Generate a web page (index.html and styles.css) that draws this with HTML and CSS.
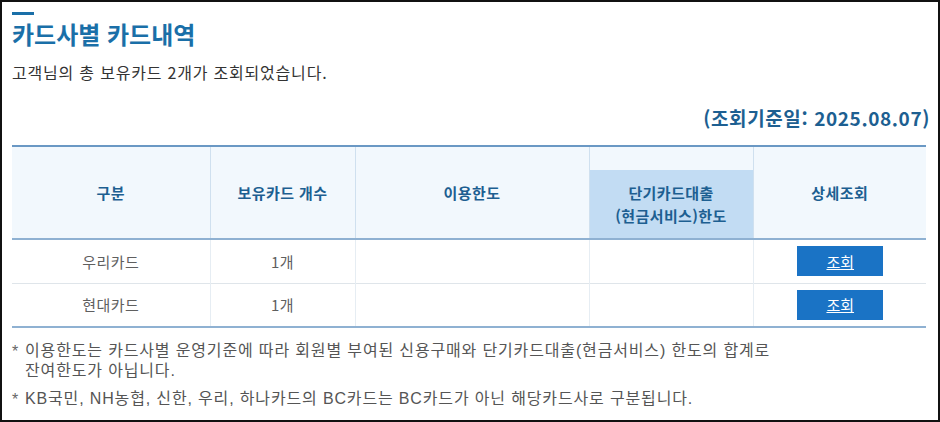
FILE: index.html
```html
<!DOCTYPE html>
<html lang="ko">
<head>
<meta charset="utf-8">
<link rel="stylesheet" href="styles.css">
</head>
<body>
<div class="frame">
  <div class="accent"></div>
  <h1 class="title">카드사별 카드내역</h1>
  <p class="summary">고객님의 총 보유카드 2개가 조회되었습니다.</p>
  <p class="basedate">(조회기준일: 2025.08.07)</p>
  <table class="cards">
    <colgroup>
      <col class="c1"><col class="c2"><col class="c3"><col class="c4"><col class="c5">
    </colgroup>
    <thead>
      <tr>
        <th>구분</th>
        <th>보유카드 개수</th>
        <th>이용한도</th>
        <th class="th-sub"><div class="sub">단기카드대출<br>(현금서비스)한도</div></th>
        <th>상세조회</th>
      </tr>
    </thead>
    <tbody>
      <tr>
        <td>우리카드</td>
        <td>1개</td>
        <td></td>
        <td></td>
        <td><button class="btn">조회</button></td>
      </tr>
      <tr>
        <td>현대카드</td>
        <td>1개</td>
        <td></td>
        <td></td>
        <td><button class="btn">조회</button></td>
      </tr>
    </tbody>
  </table>
  <ul class="notes">
    <li>이용한도는 카드사별 운영기준에 따라 회원별 부여된 신용구매와 단기카드대출(현금서비스) 한도의 합계로<br>잔여한도가 아닙니다.</li>
    <li>KB국민, NH농협, 신한, 우리, 하나카드의 BC카드는 BC카드가 아닌 해당카드사로 구분됩니다.</li>
  </ul>
</div>
</body>
</html>
```
FILE: styles.css
```css
* { box-sizing: border-box; }
html, body { margin: 0; padding: 0; background: #fff; }
body { font-family: "Noto Sans CJK KR", "Noto Sans", sans-serif; }
.frame {
  width: 940px;
  height: 422px;
  border: 2px solid #111;
  padding: 10px 12px 0 10px;
  overflow: hidden;
}
.accent { width: 22px; height: 3px; background: #1a6fa8; }
.title {
  margin: 3px 0 0;
  font-size: 24px;
  line-height: 32px;
  font-weight: 700;
  color: #1a6fa8;
  letter-spacing: 0;
}
.summary {
  margin: 11px 0 0;
  font-size: 16px;
  line-height: 22px;
  color: #333;
  letter-spacing: 0.8px;
}
.basedate {
  margin: 23px -4px 0 0;
  text-align: right;
  font-size: 19px;
  line-height: 24px;
  font-weight: 700;
  color: #1d5f91;
  letter-spacing: 0.6px;
}
.cards {
  margin-top: 15px;
  width: 914px;
  border-collapse: collapse;
  table-layout: fixed;
  border-top: 2px solid #6a98c4;
  border-bottom: 2px solid #8fb1d2;
}
.c1 { width: 198px; }
.c2 { width: 145px; }
.c3 { width: 234px; }
.c4 { width: 164px; }
.c5 { width: 173px; }
.cards th {
  height: 93px;
  padding: 0;
  background: #f2f8fd;
  color: #1d5f91;
  font-size: 15px;
  font-weight: 700;
  text-align: center;
  vertical-align: middle;
  border-left: 1px solid #cfe0ef;
  border-bottom: 2px solid #8fb1d2;
  letter-spacing: 0.4px;
}
.cards th:first-child, .cards td:first-child { border-left: none; }
.cards th.th-sub { vertical-align: bottom; }
.sub {
  height: 68px;
  background: #c2dcf3;
  display: flex;
  align-items: center;
  justify-content: center;
  line-height: 23px;
}
.cards td {
  height: 44px;
  padding: 0;
  text-align: center;
  font-size: 15px;
  color: #5f5f5f;
  border-left: 1px solid #e6edf3;
  border-top: 1px solid #dfe5ea;
  letter-spacing: 0.5px;
}
.btn {
  width: 86px;
  height: 30px;
  border: none;
  background: #1a73c5;
  color: #fff;
  font-family: inherit;
  font-size: 15px;
  text-decoration: underline;
  padding: 0;
  margin-left: 1px;
}
.notes {
  list-style: none;
  margin: 13px 0 0;
  padding: 0;
  font-family: "Liberation Sans", "Noto Sans CJK KR", sans-serif;
  font-size: 16px;
  color: #555;
}
.notes li {
  position: relative;
  padding-left: 13px;
  line-height: 20px;
  margin-bottom: 8px;
  letter-spacing: 0.85px;
}
.notes li::before {
  content: "*";
  position: absolute;
  left: 0;
  top: 1px;
  color: #666;
}
```
